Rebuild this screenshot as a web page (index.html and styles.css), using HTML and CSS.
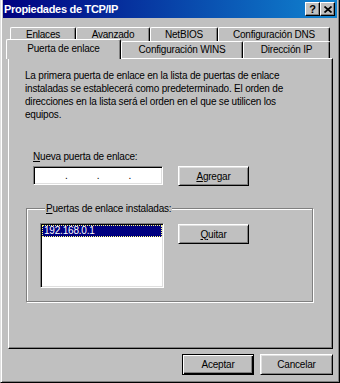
FILE: index.html
```html
<!DOCTYPE html>
<html lang="es">
<head>
    <meta charset="UTF-8">
    <title>Propiedades de TCP/IP</title>
    <link rel="stylesheet" href="styles.css">
</head>
<body>

<div class="window">
    <div class="titlebar">
        <span class="title">Propiedades de TCP/IP</span>
        <div class="cap-buttons">
            <div class="cap-btn help">?</div>
            <div class="cap-btn">
                <svg width="8" height="7" viewBox="0 0 8 7"><path d="M0.5 0.5l7 6M7.5 0.5l-7 6" stroke="#000" stroke-width="1.7"/></svg>
            </div>
        </div>
    </div>

    <div class="content">
        <div class="tabs">
            <div class="tab-row back">
                <div class="tab t-enlaces">Enlaces</div>
                <div class="tab t-avanzado">Avanzado</div>
                <div class="tab t-netbios">NetBIOS</div>
                <div class="tab t-dns">Configuración DNS</div>
            </div>
            <div class="tab-row front">
                <div class="tab active t-puerta">Puerta de enlace</div>
                <div class="tab t-wins">Configuración WINS</div>
                <div class="tab t-ip">Dirección IP</div>
            </div>
        </div>

        <div class="panel">
            <p class="intro">La primera puerta de enlace en la lista de puertas de enlace<br>instaladas se establecerá como predeterminado. El orden de<br>direcciones en la lista será el orden en el que se utilicen los<br>equipos.</p>

            <label class="field-label"><u>N</u>ueva puerta de enlace:</label>
            <div class="field-row">
                <div class="ip-box">
                    <span class="octet"></span><span class="dot">.</span>
                    <span class="octet"></span><span class="dot">.</span>
                    <span class="octet"></span><span class="dot">.</span>
                    <span class="octet"></span>
                </div>
                <button class="btn"><u>A</u>gregar</button>
            </div>

            <div class="group">
                <span class="group-title"><u>P</u>uertas de enlace instaladas:</span>
                <div class="group-row">
                    <div class="listbox">
                        <div class="item selected">192.168.0.1</div>
                    </div>
                    <button class="btn quitar"><u>Q</u>uitar</button>
                </div>
            </div>
        </div>

        <div class="footer">
            <button class="btn default">Aceptar</button>
            <button class="btn cancel">Cancelar</button>
        </div>
    </div>
</div>

</body>
</html>
```

FILE: styles.css
```css
html, body {
    margin: 0;
}

body {
    width: 340px;
    height: 383px;
    background-color: #c0c0c0;
    font-family: "Liberation Sans", Arial, sans-serif;
    font-size: 10px;
    letter-spacing: -0.2px;
    color: #000;
}

.window {
    box-sizing: border-box;
    width: 340px;
    height: 383px;
    border: 1px solid;
    border-color: #dfdfdf #000 #000 #dfdfdf;
    border-top: 0;
    box-shadow: inset 1px 0 #fff, inset -1px -1px #808080;
    padding: 0 2px 2px 2px;
}

/* barra de titulo */
.titlebar {
    height: 18px;
    display: flex;
    align-items: center;
    justify-content: space-between;
    padding: 0 2px 0 1px;
    background: linear-gradient(to right, #000080, #1084d0);
}

.title {
    color: #fff;
    font-weight: bold;
    font-size: 11px;
    letter-spacing: -0.3px;
}

.cap-buttons {
    display: flex;
}

.cap-btn {
    box-sizing: border-box;
    width: 15px;
    height: 14px;
    display: flex;
    align-items: center;
    justify-content: center;
    background-color: #c0c0c0;
    border: 1px solid;
    border-color: #fff #000 #000 #fff;
    box-shadow: inset -1px -1px #808080;
}

.cap-btn.help {
    font-weight: bold;
    font-size: 11px;
    line-height: 12px;
}

.content {
    padding: 9px 4px 0 5px;
}

/* pestañas */
.tab-row {
    display: flex;
}

.tab-row.back {
    height: 14px;
    margin-left: 2px;
}

.tab-row.front {
    height: 17px;
    align-items: flex-end;
}

.tab {
    box-sizing: border-box;
    border: 1px solid #fff;
    border-right-color: #000;
    border-bottom: 0;
    border-radius: 2px 2px 0 0;
    box-shadow: inset -1px 0 #808080;
    background-color: #c0c0c0;
    text-align: center;
    white-space: nowrap;
}

.back .tab {
    height: 14px;
    line-height: 13px;
}

.front .tab {
    height: 17px;
    line-height: 15px;
}

.front .tab.active {
    position: relative;
    z-index: 1;
    height: 20px;
    line-height: 17px;
    margin-left: -2px;
    margin-bottom: -1px;
}

.t-enlaces { width: 66px; }
.t-avanzado { width: 74px; }
.t-netbios { width: 68px; }
.t-dns { width: 112px; }
.t-puerta { width: 115px; }
.t-wins { width: 122px; }
.t-ip { width: 87px; }

/* panel */
.panel {
    box-sizing: border-box;
    height: 291px;
    border: 1px solid;
    border-color: #fff #000 #000 #fff;
    box-shadow: inset -1px -1px #808080;
    padding-top: 10px;
}

.intro {
    margin: 0 0 0 16px;
    line-height: 13px;
    white-space: nowrap;
}

.field-label {
    display: block;
    margin: 29px 0 0 24px;
    line-height: 13px;
}

.field-row {
    display: flex;
    align-items: flex-start;
    gap: 15px;
    margin: 3px 0 0 24px;
}

.ip-box {
    box-sizing: border-box;
    width: 130px;
    height: 19px;
    display: flex;
    align-items: center;
    padding: 0 2px;
    background-color: #fff;
    border: 1px solid;
    border-color: #808080 #fff #fff #808080;
    box-shadow: inset 1px 1px #000, inset -1px -1px #dfdfdf;
}

.octet {
    flex: 1;
}

.dot {
    line-height: 13px;
}

.btn {
    box-sizing: border-box;
    width: 71px;
    height: 20px;
    padding: 0;
    font: inherit;
    letter-spacing: inherit;
    color: #000;
    background-color: #c0c0c0;
    border: 1px solid;
    border-color: #fff #000 #000 #fff;
    box-shadow: inset 1px 1px #dfdfdf, inset -1px -1px #808080;
}

/* grupo */
.group {
    box-sizing: border-box;
    width: 287px;
    height: 94px;
    margin: 22px 0 0 17px;
    padding-left: 13px;
    border: 1px solid #808080;
    box-shadow: inset 1px 1px #fff, 1px 1px #fff;
}

.group-title {
    display: block;
    width: fit-content;
    margin: -7px 0 0 5px;
    padding: 0 1px;
    line-height: 13px;
    background-color: #c0c0c0;
}

.group-row {
    display: flex;
    align-items: flex-start;
    gap: 14px;
    margin-top: 8px;
}

.listbox {
    box-sizing: border-box;
    width: 124px;
    height: 65px;
    background-color: #fff;
    border: 1px solid;
    border-color: #808080 #fff #fff #808080;
    box-shadow: inset 1px 1px #000, inset -1px -1px #dfdfdf;
    padding: 1px 1px 0 1px;
}

.item {
    height: 12px;
    line-height: 12px;
    padding-left: 2px;
}

.item.selected {
    background-color: #000080;
    color: #fff;
    outline: 1px dotted #ffff80;
    outline-offset: -1px;
}

.quitar {
    margin-top: 1px;
}

/* botones de abajo */
.footer {
    display: flex;
    justify-content: flex-end;
    gap: 6px;
    margin-top: 5px;
}

.footer .btn {
    height: 21px;
}

.btn.default {
    width: 72px;
    border-color: #000;
    box-shadow: inset 1px 1px #fff, inset -1px -1px #000, inset -2px -2px #808080;
}

.btn.cancel {
    width: 73px;
}
```
